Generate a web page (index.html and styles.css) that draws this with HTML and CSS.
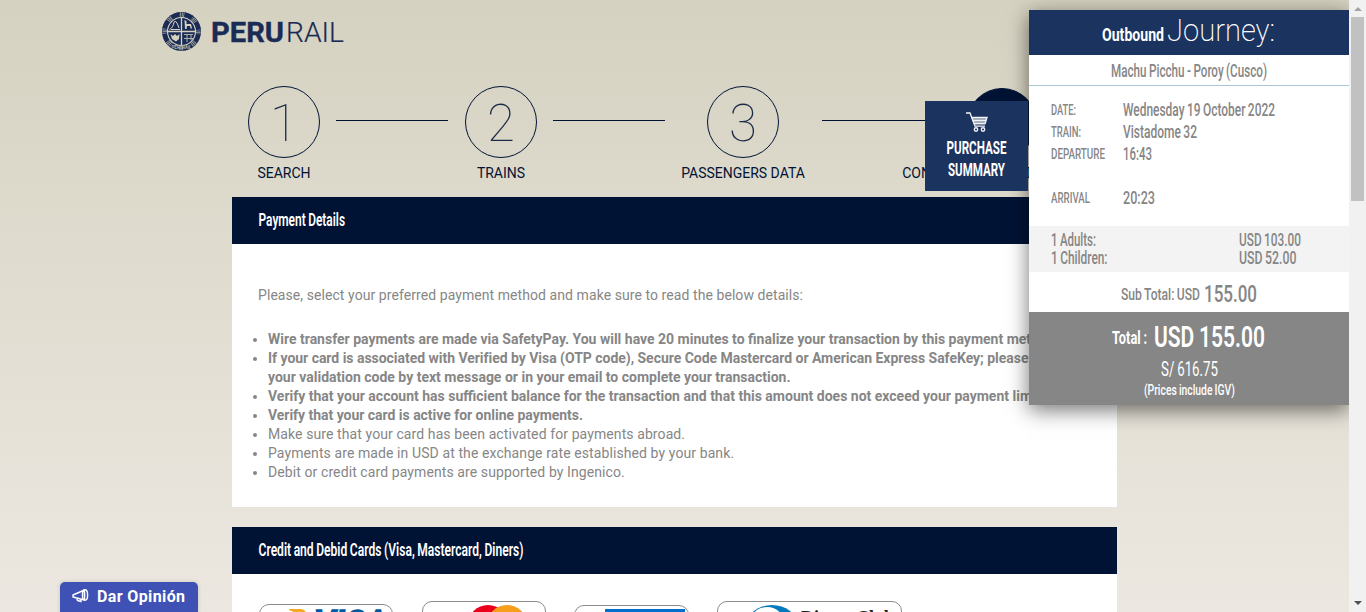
FILE: index.html
```html
<!DOCTYPE html>
<html lang="en">
<head>
<meta charset="utf-8">
<title>PeruRail - Payment</title>
<link rel="stylesheet" href="styles.css">
</head>
<body>
<div class="page">
  <header class="header">
    <svg class="logo" width="184" height="42" viewBox="161 11 184 42">
      <circle cx="181.5" cy="31.5" r="19.5" fill="#1a2c55"/>
      <circle cx="181.5" cy="31.5" r="16.8" fill="none" stroke="#aaa99f" stroke-width="4.6" stroke-dasharray="5.2 8" stroke-dashoffset="2.6"/>
      <circle cx="181.5" cy="31.5" r="16.8" fill="none" stroke="#1a2c55" stroke-width="5" stroke-dasharray=".8 .9"/>
      <circle cx="181.5" cy="31.5" r="14" fill="#1a2c55" stroke="#d6d2c2" stroke-width="1.1"/>
      <path d="M181.5 17.500V45.500M167.500 31.500H195.500" stroke="#d6d2c2" stroke-width="1.3"/>
      <path d="M169.500 29.500Q173 28 174 22Q176 20 177.500 24L179 28M171 29.500H180" fill="none" stroke="#d6d2c2" stroke-width="1"/>
      <path d="M184.500 20L186.500 21V24H191L192 28.500H190.500L190 26H187L186.500 29H185Z" fill="#d6d2c2"/>
      <path d="M170.500 34L173 36L175 34L177 36L179.500 34L179 39L176 41.500L172 39Z" fill="#d6d2c2"/>
      <path d="M184 34.500H193M184 38.500H193M187 34.500V42M191 34.500V40" stroke="#aeb0a9" stroke-width="1"/>
      <text x="171.500" y="49" font-size="4.500" font-weight="700" textLength="20" fill="#aeb0a9">PERURAIL</text>
      <text x="211" y="41.500" font-size="28.500" font-weight="700" textLength="73" lengthAdjust="spacingAndGlyphs" fill="#1a2c55" stroke="#1a2c55" stroke-width=".4">PERU</text>
      <text x="286" y="41.500" font-size="28.500" font-weight="300" textLength="58" lengthAdjust="spacingAndGlyphs" fill="#1a2c55" stroke="#1a2c55" stroke-width=".2">RAIL</text>
    </svg>
  </header>

  <main class="content">
    <ol class="steps">
      <li class="step step-search"><span class="num">1</span><span class="label">SEARCH</span></li>
      <li class="link"></li>
      <li class="step step-trains"><span class="num">2</span><span class="label">TRAINS</span></li>
      <li class="link"></li>
      <li class="step step-data"><span class="num">3</span><span class="label">PASSENGERS DATA</span></li>
      <li class="link"></li>
      <li class="step step-pay"><span class="num active">4</span><span class="label">CONFIRMATION AND PAYMENT</span></li>
    </ol>

    <section class="card details">
      <h2 class="bar"><svg class="cond" width="87" height="22"><text x=".5" y="17" font-size="17.500" font-weight="600" textLength="86.500" lengthAdjust="spacingAndGlyphs">Payment Details</text></svg></h2>
      <p class="intro">Please, select your preferred payment method and make sure to read the below details:</p>
      <ul class="notes">
        <li><b>Wire transfer payments are made via SafetyPay. You will have 20 minutes to finalize your transaction by this payment method.</b></li>
        <li><b><span class="tight">If your card is associated with Verified by Visa (OTP code), Secure Code Mastercard or American Express SafeKey; please enter</span><br>your validation code by text message or in your email to complete your transaction.</b></li>
        <li><b>Verify that your account has sufficient balance for the transaction and that this amount does not exceed your payment limit.</b></li>
        <li><b class="tight">Verify that your card is active for online payments.</b></li>
        <li class="loose">Make sure that your card has been activated for payments abroad.</li>
        <li class="loose">Payments are made in USD at the exchange rate established by your bank.</li>
        <li class="loose">Debit or credit card payments are supported by Ingenico.</li>
      </ul>
    </section>

    <section class="card">
      <h2 class="bar"><svg class="cond" width="265" height="22"><text x=".5" y="17" font-size="17.500" font-weight="600" textLength="265" lengthAdjust="spacingAndGlyphs">Credit and Debid Cards (Visa, Mastercard, Diners)</text></svg></h2>
      <div class="brands">
        <div class="brand visa"><svg width="132" height="60">
          <path d="M29 4H40Q45 4 46 8L50 22Q43 10 29 5Z" fill="#f7a823"/>
          <text x="54" y="33" font-size="39" font-weight="700" font-style="italic" textLength="73" lengthAdjust="spacingAndGlyphs" fill="#00579f" stroke="#00579f" stroke-width="1.500">VISA</text></svg></div>
        <div class="brand mastercard"><svg width="122" height="60"><circle cx="65" cy="23" r="20" fill="#eb001b"/><circle cx="84" cy="23" r="20" fill="#f79e1b"/></svg></div>
        <div class="brand amex"><svg width="113" height="60"><rect x="30" y="3" width="80" height="50" fill="#006fcf"/></svg></div>
        <div class="brand diners"><svg width="183" height="60"><ellipse cx="54" cy="23" rx="25" ry="20" fill="#0079be"/><ellipse cx="49" cy="23" rx="18" ry="18" fill="#fff"/>
          <text class="serif" x="83" y="23" font-size="21" font-weight="700" textLength="93" lengthAdjust="spacingAndGlyphs" fill="#231f20">Diners Club</text></svg></div>
      </div>
    </section>
  </main>

  <button class="opinion">
    <svg width="17" height="15" viewBox="0 0 17 15" fill="none" stroke="#fff" stroke-width="1.400" stroke-linejoin="round"><path d="M1 7L12.500 2V12L1 9ZM4.500 10L5.500 12.500L9 13.500V11.500"/><ellipse cx="13" cy="7" rx="2.600" ry="5.200"/><path d="M12.500 5.500V8.500"/></svg>
    <span>Dar Opinión</span>
  </button>

  <aside class="summary">
    <header class="journey"><svg class="cond" width="174" height="32"><text y="24" font-size="18.500" font-weight="700" textLength="62" lengthAdjust="spacingAndGlyphs">Outbound</text><text x="65" y="24" font-size="31" font-weight="200" textLength="108" lengthAdjust="spacingAndGlyphs">Journey:</text></svg></header>
    <div class="route"><svg class="cond" width="156" height="22"><text y="17" font-size="17.500" font-weight="500" textLength="156" lengthAdjust="spacingAndGlyphs">Machu Picchu - Poroy (Cusco)</text></svg></div>
    <div class="schedule">
      <svg class="cond" width="25" height="22"><text y="16" font-size="15.500" textLength="25" lengthAdjust="spacingAndGlyphs">DATE:</text></svg>
      <svg class="cond" width="152" height="22"><text y="17" font-size="17.500" textLength="152" lengthAdjust="spacingAndGlyphs">Wednesday 19 October 2022</text></svg>
      <svg class="cond" width="30" height="22"><text y="16" font-size="15.500" textLength="30" lengthAdjust="spacingAndGlyphs">TRAIN:</text></svg>
      <svg class="cond" width="74" height="22"><text y="17" font-size="17.500" textLength="74" lengthAdjust="spacingAndGlyphs">Vistadome 32</text></svg>
      <svg class="cond" width="54" height="22"><text y="16" font-size="15.500" textLength="54" lengthAdjust="spacingAndGlyphs">DEPARTURE</text></svg>
      <svg class="cond" width="29" height="22"><text y="17" font-size="17.500" textLength="29" lengthAdjust="spacingAndGlyphs">16:43</text></svg>
      <svg class="cond late" width="39" height="22"><text y="16" font-size="15.500" textLength="39" lengthAdjust="spacingAndGlyphs">ARRIVAL</text></svg>
      <svg class="cond late" width="32" height="22"><text y="17" font-size="17.500" textLength="32" lengthAdjust="spacingAndGlyphs">20:23</text></svg>
    </div>
    <div class="fares">
      <svg class="cond" width="45" height="18"><text y="15" font-size="17.500" textLength="45" lengthAdjust="spacingAndGlyphs">1 Adults:</text></svg>
      <svg class="cond" width="63" height="18"><text y="15" font-size="17.500" textLength="62" lengthAdjust="spacingAndGlyphs">USD 103.00</text></svg>
      <svg class="cond" width="57" height="18"><text y="15" font-size="17.500" textLength="56.500" lengthAdjust="spacingAndGlyphs">1 Children:</text></svg>
      <svg class="cond" width="58" height="18"><text y="15" font-size="17.500" textLength="57.500" lengthAdjust="spacingAndGlyphs">USD 52.00</text></svg>
    </div>
    <div class="subtotal"><svg class="cond" width="136" height="24"><text y="20" font-size="17" textLength="79" lengthAdjust="spacingAndGlyphs">Sub Total: USD</text><text x="83" y="22" font-size="24.500" textLength="53" lengthAdjust="spacingAndGlyphs">155.00</text></svg></div>
    <div class="total">
      <svg class="cond" width="153" height="37"><text x="-1" y="32" font-size="18" font-weight="700" textLength="35" lengthAdjust="spacingAndGlyphs">Total :</text><text x="41" y="35" font-size="30" font-weight="600" textLength="111" lengthAdjust="spacingAndGlyphs">USD 155.00</text></svg>
      <svg class="cond" width="57" height="29"><text y="27" font-size="21" textLength="57" lengthAdjust="spacingAndGlyphs">S/ 616.75</text></svg>
      <svg class="cond" width="91" height="22"><text y="17" font-size="14.500" font-weight="500" textLength="91" lengthAdjust="spacingAndGlyphs">(Prices include IGV)</text></svg>
    </div>
    <a class="purchase">
      <svg width="24" height="22" viewBox="0 0 24 22"><path d="M6 6H22.500L20 13.500H9Z" fill="#8d99af"/><path d="M1 2H5L10 15.200H20M6 6.500H22L20 13M7 9.500H20.500M8.500 12.500H20" fill="none" stroke="#f2f4f7" stroke-width="1.300"/><g fill="#1b335f" stroke="#f2f4f7" stroke-width="1.400"><circle cx="11" cy="18.500" r="1.700"/><circle cx="18" cy="18.500" r="1.700"/></g></svg>
      <svg class="cond" width="60" height="22"><text x="-.5" y="21" font-size="18" font-weight="700" textLength="60" lengthAdjust="spacingAndGlyphs">PURCHASE</text></svg>
      <svg class="cond" width="57" height="22"><text y="21" font-size="18" font-weight="700" textLength="57" lengthAdjust="spacingAndGlyphs">SUMMARY</text></svg>
    </a>
  </aside>

  <div class="scrollbar"><i class="up"></i><i class="thumb"></i><i class="down"></i></div>
</div>
</body>
</html>
```
FILE: styles.css
```css
* { box-sizing: border-box; }
body { margin: 0; overflow: hidden; font-family: Roboto, "Liberation Sans", sans-serif; }
svg { display: block; }
.page {
  position: relative;
  height: 612px;
  overflow: hidden;
  background: linear-gradient(#d6d2c1, #ece8e1);
}
.header { height: 86px; padding: 11px 0 0 161px; }
.content { width: 885px; margin-left: 232px; }

.cond { overflow: visible; fill: currentColor; flex: none; word-spacing: -.7px; }
.serif { font-family: "Liberation Serif", serif; }

.steps {
  display: flex;
  height: 111px;
  margin: 0;
  padding: 0 0 0 16px;
  list-style: none;
  color: #001335;
}
.step { display: flex; flex: none; flex-direction: column; align-items: center; width: 72px; }
.step-trains { margin-left: 17px; }
.step-data { margin-left: 42px; }
.step-pay { margin-left: 32px; }
.num {
  width: 72px;
  height: 72px;
  border: 1px solid #001335;
  border-radius: 50%;
  color: #1c2c48;
  font-size: 51px;
  font-weight: 100;
  line-height: 74px;
  text-align: center;
}
.num.active { width: 70px; height: 70px; margin-top: 2px; background: #001335; color: #fff; }
.label { margin-top: 5px; font-size: 14px; font-weight: 370; line-height: 20px; white-space: nowrap; }
.link { flex: none; width: 112px; height: 1px; margin: 34px 0 0 16px; background: #001335; }
.step-data + .link { margin-left: 43px; }

.card { margin-bottom: 20px; background: #fff; color: #868686; font-size: 14px; }
.details { height: 310px; }
.bar { height: 47px; margin: 0; padding: 12px 26px; background: #001335; color: #fff; }
.intro { margin: 41px 26px 0; letter-spacing: .07px; line-height: 20px; }
.notes { margin: 25px 0 0; padding-left: 36px; line-height: 19px; white-space: nowrap; }
.tight { letter-spacing: -.03px; }
.loose { letter-spacing: .095px; }

.brands { display: flex; padding: 27px 0 0 27px; }
.brand { height: 70px; border: 1px solid #8b8b8b; border-radius: 10px; }
.visa { width: 134px; margin-top: 3px; }
.mastercard { width: 124px; margin-left: 29px; }
.amex { width: 115px; margin: 4px 0 0 28px; }
.diners { width: 185px; margin-left: 28px; }

.opinion {
  position: absolute;
  left: 60px;
  bottom: -4px;
  display: flex;
  gap: 8px;
  width: 138px;
  height: 34px;
  padding: 6px 0 0 12px;
  border: 0;
  border-radius: 5px;
  background: #3f51b5;
  box-shadow: 0 0 4px rgba(0, 0, 0, .15);
  color: #fff;
  font: 700 16px/18px Roboto, sans-serif;
  letter-spacing: .38px;
  white-space: nowrap;
}

.summary {
  position: absolute;
  top: 10px;
  right: 17px;
  width: 320px;
  height: 395px;
  background: #fff;
  box-shadow: 0 5px 20px rgba(0, 0, 0, .55);
  color: #868686;
}
.journey { display: flex; justify-content: center; height: 45px; padding-top: 7px; background: #1b335f; color: #fff; }
.route { display: flex; justify-content: center; height: 31px; padding-top: 5px; border-bottom: 1px solid #a9c6d6; }
.schedule, .fares, .subtotal { font-weight: 500; }
.schedule { display: grid; grid-template-columns: 72px 1fr; height: 140px; padding: 13px 22px 0; align-content: start; }
.late { margin-top: 22px; }
.fares { display: grid; grid-template-columns: 188px 1fr; height: 46px; padding: 5px 22px; background: #f3f3f3; }
.subtotal { display: flex; justify-content: center; height: 40px; padding-top: 8px; }
.total { display: flex; flex-direction: column; align-items: center; height: 93px; background: #868686; color: #fff; }
.purchase {
  position: absolute;
  top: 91px;
  left: -104px;
  display: flex;
  flex-direction: column;
  align-items: center;
  width: 103px;
  height: 90px;
  padding-top: 10px;
  background: #1b335f;
  color: #fff;
}

.scrollbar {
  position: absolute;
  top: 0;
  right: 0;
  display: flex;
  flex-direction: column;
  align-items: center;
  width: 17px;
  height: 612px;
  padding: 7px 0;
  background: #f1f1f1;
}
.up { border: 4px solid transparent; border-top: 0; border-bottom-color: #a3a3a3; }
.thumb { width: 13px; height: 184px; margin-top: 6px; background: #c1c1c1; }
.down { margin-top: auto; border: 4px solid transparent; border-bottom: 0; border-top-color: #505050; }
```
